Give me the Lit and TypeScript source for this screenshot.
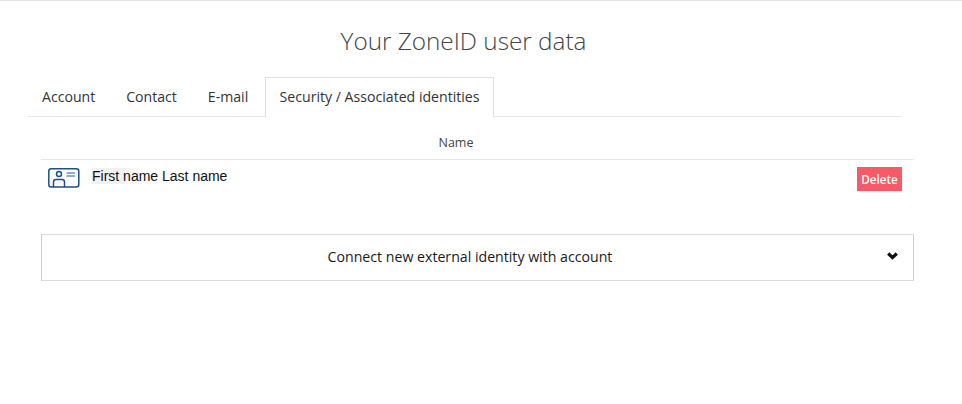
import { LitElement, html, css } from "lit";
import { customElement } from "lit/decorators.js";

@customElement("app-root")
export class AppRoot extends LitElement {
  static styles = css`
    :host { display: block; height: 404px; background: #fff; font-family: "Open Sans", sans-serif; color: #333; border-top: 1px solid #e4e4e4; box-sizing: border-box; overflow: hidden; }
    h1 { margin: 0; padding-top: 22px; width: 927px; text-align: center; font-size: 24.3px; line-height: 35px; font-weight: 300; color: #444; letter-spacing: 0; }
    .tabs { display: flex; margin: 19px 0 0 28px; width: 873px; height: 39px; border-bottom: 1px solid #e6e6e6; box-sizing: content-box; }
    .tab { padding: 0 14px 0 14px; margin-right: 3px; line-height: 40px; font-size: 14.1px; color: #333; white-space: nowrap; }
    .tab.active { margin: 0; padding: 0 13.4px; background: #fff; border: 1px solid #e0e0e0; border-bottom: 1px solid #fff; height: 39px; line-height: 38px; font-size: 14.12px; }
    .content { margin-left: 41px; width: 873px; }
    .head { height: 43px; line-height: 51px; box-sizing: border-box; border-bottom: 1px solid #e8e8e8; text-align: center; font-size: 12.5px; color: #444; padding-right: 43px; }
    .row { display: flex; align-items: flex-start; height: 74px; padding: 7px 12px 0 7px; box-sizing: border-box; }
    .row svg { display: block; margin-top: 1px; }
    .name { font-family: "Liberation Sans", Arial, sans-serif; font-size: 14px; line-height: 18px; color: #111; margin-left: 12px; flex: 1; }
    .hl { background: linear-gradient(90deg, #f1f1f1 60%, #f8f8f8 100%); }
    .delete { width: 45px; height: 24px; background: #f55a66; color: #fff; font-size: 11.7px; font-weight: 600; line-height: 24px; text-align: center; }
    .accordion { display: flex; align-items: center; height: 47px; box-sizing: border-box; border: 1px solid #dcdcdc; border-left-color: #cfcfcf; border-right-color: #cfcfcf; padding: 0 15px 2px 0; position: relative; font-size: 14.15px; color: #1a1a1a; justify-content: center; }
    .chevron { position: absolute; right: 15px; top: 16.5px; display: block; }
  `;
  render() {
    return html`
      <h1>Your ZoneID user data</h1>
      <div class="tabs">
        <div class="tab">Account</div>
        <div class="tab">Contact</div>
        <div class="tab">E-mail</div>
        <div class="tab active">Security / Associated identities</div>
      </div>
      <div class="content">
        <div class="head">Name</div>
        <div class="row">
          <svg width="32" height="20" viewBox="0 0 32 20" fill="none" stroke="#1f4f88" stroke-width="1.5">
            <rect x="0.8" y="0.8" width="30" height="18.2" rx="2.5"></rect>
            <circle cx="11" cy="6" r="2.5"></circle>
            <path d="M5.5 19v-5c0-1.6 1-2.5 2.5-2.5h6c1.5 0 2.5.9 2.5 2.5v5"></path>
            <path d="M18.5 5h8.5M18.5 8h8.5" stroke="#6f93b8"></path>
          </svg>
          <div class="name"><span class="hl">First na</span>me Last name</div>
          <div class="delete">Delete</div>
        </div>
        <div class="accordion">
          <span>Connect new external identity with account</span>
          <svg class="chevron" width="11" height="8" viewBox="0 0 11 8" fill="none" stroke="#111" stroke-width="3.2">
            <path d="M1.2 1.5l4.3 4 4.3-4"></path>
          </svg>
        </div>
      </div>
    `;
  }
}
